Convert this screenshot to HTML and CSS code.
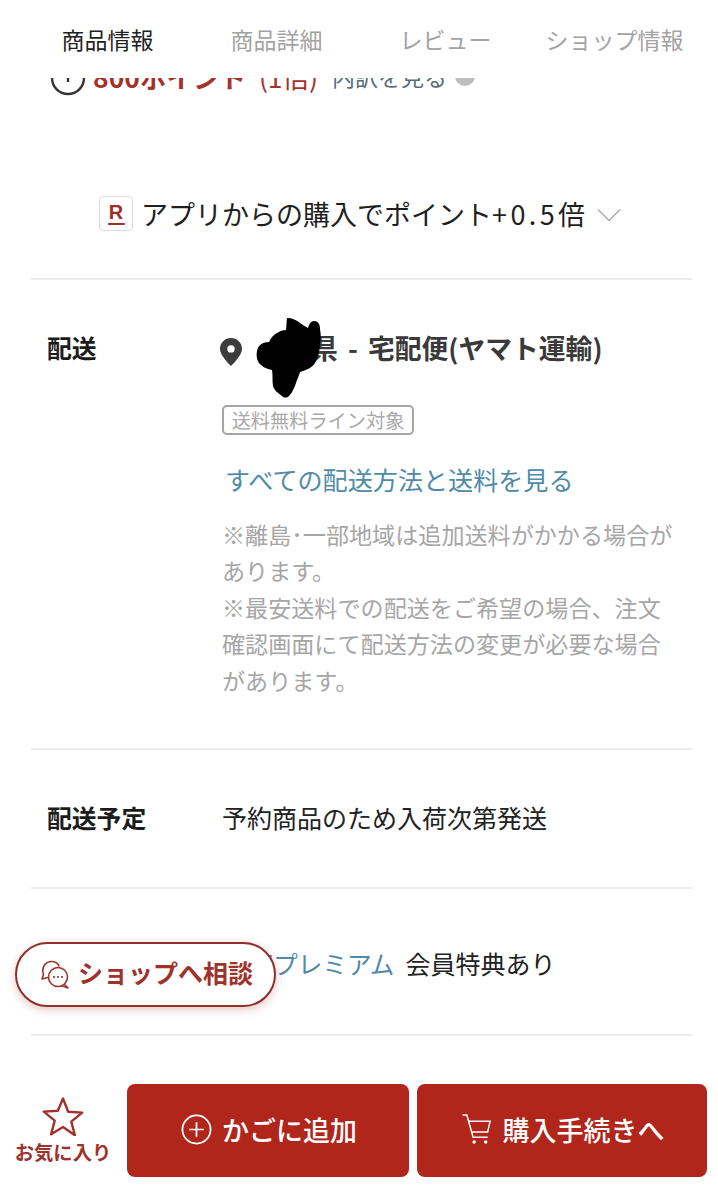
FILE: index.html
```html
<!DOCTYPE html>
<html lang="ja">
<head>
<meta charset="utf-8">
<title>商品情報</title>
<link rel="stylesheet" href="styles.css">
</head>
<body>
<div class="page">
  <nav class="tabs">
    <span class="tab active">商品情報</span>
    <span class="tab">商品詳細</span>
    <span class="tab">レビュー</span>
    <span class="tab">ショップ情報</span>
  </nav>
  <div class="clip">
    <div class="points">
      <svg class="points-icon" viewBox="0 0 36 36"><circle cx="18" cy="18" r="16" fill="none" stroke="#333" stroke-width="2.4"/><path d="M18 8v14" stroke="#333" stroke-width="2.4"/></svg>
      <span class="points-red">800ポイント</span>
      <span class="points-rate">(1倍)</span>
      <span class="points-link">内訳を見る</span>
      <span class="points-dot"></span>
    </div>
  </div>
  <div class="app-line">
    <span class="r-badge"><span class="r-letter">R</span><span class="r-swoosh"></span></span>
    <span class="app-text">アプリからの購入でポイント<span class="app-num">+0.5</span>倍</span>
    <svg class="chevron" viewBox="0 0 24 14"><path d="M1 1.5l11 11 11-11" fill="none" stroke="#a8a8a8" stroke-width="1.3"/></svg>
  </div>
  <section class="row row-ship">
    <div class="label">配送</div>
    <div class="value">
      <div class="ship-line">
        <svg class="pin" viewBox="0 0 22 28"><path fill-rule="evenodd" fill="#3c3c3c" d="M11 0C4.9 0 0 4.8 0 10.8 0 18 11 28 11 28s11-10 11-17.200C22 4.800 17.100 0 11 0zm0 7.200a3.700 3.700 0 1 1 0 7.400 3.700 3.700 0 0 1 0-7.400z"/></svg>
        <span class="ship-text">県 - 宅配便(ヤマト運輸)</span>
        <svg class="scribble" viewBox="0 0 66 80"><path fill="#000" d="M32 0c5 0 10 2 13 5 3 2 6 4 8 5 1-4 3-7 6-7 4 0 6 3 6 8 1 5 1 10 0 14 0 7-2 15-5 20-3 5-9 7-15 9-1 3-2 6-3 8-2 6-4 12-8 16-2 2-5 2-7 0-4-3-8-6-9-10-1-5 0-11-1-16-4-1-8-2-11-5-4-3-5-9-4-14 1-6 6-9 12-9 2-4 4-7 8-9 3-2 6-3 9-3z"/></svg>
      </div>
      <span class="tag">送料無料ライン対象</span>
      <a class="link ship-link">すべての配送方法と送料を見る</a>
      <p class="note">※離島･一部地域は追加送料がかかる場合があります。<br>※最安送料での配送をご希望の場合、注文確認画面にて配送方法の変更が必要な場合があります。</p>
    </div>
  </section>
  <section class="row row-date">
    <div class="label">配送予定</div>
    <div class="value date-text">予約商品のため入荷次第発送</div>
  </section>
  <section class="row row-member">
    <div class="label"></div>
    <div class="value member"><a class="link member-link">楽天プレミアム</a><span class="member-text">会員特典あり</span></div>
  </section>

  <button class="consult">
    <svg class="consult-icon" viewBox="0 0 30 30"><g fill="none" stroke="#a0322c" stroke-width="1.6" stroke-linejoin="round"><path d="M8 17.500 2 19l1.500-4.500C1 8.500 5 1.500 11.500 1.500c3.500 0 6.500 2 7.700 5"/><circle cx="18" cy="17" r="9.500" fill="#fff"/><path d="M24 24l4 4-7-2.500"/></g><g fill="#a0322c"><circle cx="14" cy="17" r="1.100"/><circle cx="18" cy="17" r="1.100"/><circle cx="22" cy="17" r="1.100"/></g></svg>
    <span>ショップへ相談</span>
  </button>

  <footer class="bar">
    <div class="fav">
      <svg class="star" viewBox="0 0 42 40"><path d="M21 2.500l5.200 13.300 14 .8-10.900 9 3.600 13.700L21 31l-11.900 7.300 3.600-13.700-10.900-9 14-.8z" fill="none" stroke="#a0322c" stroke-width="2.400" stroke-linejoin="round"/></svg>
      <span>お気に入り</span>
    </div>
    <button class="cta cta-cart">
      <svg class="plus" viewBox="0 0 32 32"><circle cx="16" cy="16" r="14.500" fill="none" stroke="#fff" stroke-width="1.800"/><path d="M16 8.500v15M8.500 16h15" stroke="#fff" stroke-width="1.800"/></svg>
      <span>かごに追加</span>
    </button>
    <button class="cta cta-buy">
      <svg class="cart" viewBox="0 0 30 32"><g fill="none" stroke="#fff" stroke-width="1.500"><path d="M0 1h4.500L11 24h15"/><path d="M6 7.500h22.500L26 18.500H9"/></g><circle cx="12" cy="29" r="1.800" fill="#fff"/><circle cx="24" cy="29" r="1.800" fill="#fff"/></svg>
      <span>購入手続きへ</span>
    </button>
  </footer>
</div>
</body>
</html>
```
FILE: styles.css
```css
* { box-sizing: border-box; }
html, body { margin: 0; padding: 0; background: #fff; }
body {
  font-family: "Noto Sans CJK JP", "Noto Sans", sans-serif;
  color: #1a1a1a;
}
.page {
  position: relative;
  width: 718px;
  height: 1200px;
  overflow: hidden;
  background: #fff;
}

/* tabs */
.tabs {
  display: grid;
  grid-template-columns: repeat(4, 169px);
  padding: 0 19px 0 23px;
  height: 78px;
  align-items: start;
}
.tab {
  text-align: center;
  font-size: 23px;
  line-height: 26px;
  margin-top: 26px;
  color: #a3a3a3;
  white-space: nowrap;
}
.tab.active { color: #222; }

/* partly scrolled-out row */
.clip {
  height: 18px;
  overflow: hidden;
  padding-left: 50px;
}
.points {
  display: flex;
  align-items: center;
  height: 36px;
  margin-top: -20px;
  white-space: nowrap;
}
.points-icon { width: 36px; height: 36px; flex: none; margin-top: 4px; }
.points-red { margin-left: 7px; font-size: 26.500px; font-weight: 700; color: #a3322b; }
.points-rate { margin-left: 13px; font-size: 26.500px; color: #a3322b; }
.points-link { margin-left: 14px; font-size: 23px; color: #5a6d7c; }
.points-dot {
  width: 20px;
  height: 20px;
  border-radius: 50%;
  background: #bdbdbd;
  margin-left: 8px;
}

/* app line */
.app-line {
  height: 184px;
  display: flex;
  align-items: center;
  margin: 0 26px 0 31px;
  padding: 53px 0 0 68px;
  border-bottom: 2px solid #ebebeb;
}
.r-badge {
  flex: none;
  width: 34px;
  height: 35px;
  border: 1px solid #ddd;
  border-radius: 4px;
  display: flex;
  flex-direction: column;
  align-items: center;
  justify-content: center;
}
.r-letter {
  font-family: "Liberation Sans", sans-serif;
  font-size: 20px;
  line-height: 19px;
  font-weight: 700;
  color: #9c2d27;
}
.r-swoosh {
  width: 17px;
  height: 2px;
  margin-top: 1px;
  border-radius: 2px;
  background: #9c2d27;
}
.app-text {
  margin-left: 8px;
  font-size: 27px;
  line-height: 36px;
  color: #1f1f1f;
  white-space: nowrap;
}
.app-num { letter-spacing: 3.400px; }
.chevron { flex: none; width: 24px; height: 14px; margin-left: 12px; margin-top: 2px; }

/* rows */
.row {
  display: grid;
  grid-template-columns: 175px 1fr;
  margin: 0 26px 0 31px;
  padding-left: 16px;
  border-bottom: 2px solid #ebebeb;
}
.label {
  font-size: 24.800px;
  font-weight: 700;
  line-height: 36px;
  color: #1c1c1c;
}
.row-ship { height: 470px; padding-top: 49px; }
.row-date { height: 139px; padding-top: 49px; }
.row-member { height: 147px; padding-top: 56px; }

.ship-line {
  position: relative;
  display: flex;
  align-items: center;
  height: 40px;
}
.pin { width: 22px; height: 28px; flex: none; margin-left: -2px; margin-top: 6px; }
.ship-text {
  margin: 0 0 4px 69px;
  font-size: 26.800px;
  font-weight: 700;
  word-spacing: 4px;
  color: #3a3a3a;
  white-space: nowrap;
}
.scribble {
  position: absolute;
  left: 33px;
  top: -11px;
  width: 66px;
  height: 80px;
}
.tag {
  display: inline-block;
  margin-top: 36px;
  width: 192px;
  height: 30px;
  border: 2px solid #a5a5a5;
  border-radius: 5px;
  font-size: 19.200px;
  line-height: 26px;
  text-align: center;
  color: #a8a8a8;
  white-space: nowrap;
}
.link { color: #4f8ba8; white-space: nowrap; }
.ship-link {
  display: block;
  margin: 26px 0 0 3px;
  font-size: 25.100px;
  line-height: 36px;
}
.note {
  margin: 19px 0 0;
  width: 454px;
  font-size: 23.100px;
  line-height: 36.400px;
  color: #a6a6a6;
}
.date-text { font-size: 25px; line-height: 36px; color: #222; }
.member { display: flex; align-items: center; height: 36px; padding-left: 2px; }
.member-link { font-size: 24.600px; }
.member-text { margin-left: 11px; font-size: 25px; color: #222; white-space: nowrap; }

/* floating consult button */
.consult {
  position: absolute;
  left: 15px;
  top: 942px;
  width: 261px;
  height: 65px;
  display: flex;
  align-items: center;
  padding: 0 0 5px 23px;
  background: #fff;
  border: 2px solid #8f2f2a;
  border-radius: 33px;
  box-shadow: 0 3px 10px rgba(160, 60, 50, .28);
  font-family: inherit;
  font-size: 25px;
  font-weight: 700;
  color: #a0322c;
  white-space: nowrap;
}
.consult-icon { width: 30px; height: 30px; flex: none; margin: 5px 8px 0 0; }

/* bottom bar */
.bar {
  position: absolute;
  left: 0;
  right: 11px;
  bottom: 23px;
  height: 93px;
  display: flex;
  gap: 8px;
}
.fav {
  width: 119px;
  flex: none;
  padding-left: 7px;
  display: flex;
  flex-direction: column;
  align-items: center;
  color: #a0322c;
  font-size: 19.300px;
  font-weight: 700;
  line-height: 24px;
  white-space: nowrap;
}
.star { width: 42px; height: 40px; margin-top: 12px; margin-bottom: 4px; }
.cta {
  display: flex;
  align-items: center;
  justify-content: center;
  padding: 0 0 3px 2px;
  border: 0;
  border-radius: 8px;
  background: #b0261b;
  color: #fff;
  font-family: inherit;
  font-size: 27px;
  font-weight: 500;
  white-space: nowrap;
}
.cta-cart { width: 282px; flex: none; gap: 10px; }
.cta-buy { flex: 1; gap: 11px; }
.plus { width: 31px; height: 31px; flex: none; }
.cart { width: 30px; height: 31px; flex: none; }
```
